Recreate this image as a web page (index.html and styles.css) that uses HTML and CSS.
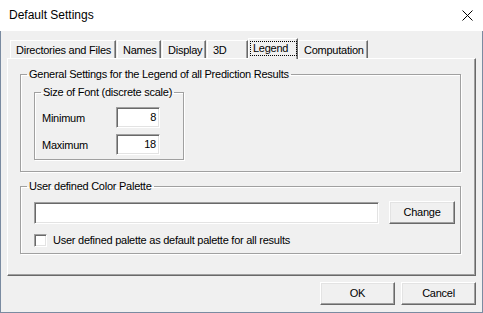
FILE: index.html
```html
<!DOCTYPE html>
<html>
<head>
<meta charset="utf-8">
<link rel="stylesheet" href="styles.css">
</head>
<body>
<div class="window">
  <div class="titlebar">
    <span class="title">Default Settings</span>
    <svg class="close" width="11" height="11" viewBox="0 0 11 11"><path d="M0.5 0.5 L10.5 10.5 M10.5 0.5 L0.5 10.5" stroke="#000" stroke-width="1" fill="none"/></svg>
  </div>
  <div class="frame">
    <div class="tabs">
      <div class="tab t1">Directories and Files</div>
      <div class="tab t2">Names</div>
      <div class="tab t3">Display</div>
      <div class="tab t4">3D</div>
      <div class="tab sel t5"><span class="focus">Legend</span></div>
      <div class="tab t6">Computation</div>
    </div>
    <div class="panel">
      <fieldset class="group g1">
        <legend>General Settings for the Legend of all Prediction Results</legend>
        <div class="g1-body">
          <fieldset class="group gfont">
            <legend>Size of Font (discrete scale)</legend>
            <div class="gfont-body">
              <div class="row"><span class="lbl">Minimum</span><div class="edit num">8</div></div>
              <div class="row"><span class="lbl">Maximum</span><div class="edit num">18</div></div>
            </div>
          </fieldset>
        </div>
      </fieldset>
      <fieldset class="group g2">
        <legend>User defined Color Palette</legend>
        <div class="g2-body">
          <div class="palrow"><div class="edit wide"></div><div class="btn change">Change</div></div>
          <div class="check"><span class="box"></span><span>User defined palette as default palette for all results</span></div>
        </div>
      </fieldset>
    </div>
    <div class="buttons">
      <div class="btn dlg">OK</div>
      <div class="btn dlg">Cancel</div>
    </div>
  </div>
</div>
</body>
</html>
```
FILE: styles.css
```css
* { box-sizing: border-box; }
html, body { margin: 0; padding: 0; background: #f0f0f0; }
body {
  font-family: "Liberation Sans", Arial, sans-serif;
  font-size: 11px;
  letter-spacing: -0.25px;
  color: #000;
}
.window {
  width: 483px;
  height: 313px;
  display: flex;
  flex-direction: column;
  background: #f0f0f0;
}
.titlebar {
  height: 31px;
  flex: none;
  background: #fff;
  display: flex;
  align-items: flex-start;
  padding-left: 9px;
}
.title {
  font-size: 12px;
  letter-spacing: 0;
  line-height: 14px;
  margin-top: 8px;
}
.close {
  margin-left: auto;
  margin-right: 10px;
  margin-top: 10px;
}
.frame {
  flex: 1;
  border: 1px solid #7a8ba1;
  border-top: 0;
  padding: 7px 6px 0 6px;
  display: flex;
  flex-direction: column;
}
.tabs {
  height: 20px;
  display: flex;
  align-items: flex-end;
  padding-left: 3px;
  position: relative;
  z-index: 2;
}
.tab {
  height: 18px;
  border-top: 1px solid #fff;
  border-left: 1px solid #fff;
  border-right: 1px solid #696969;
  box-shadow: inset -1px 0 0 #a0a0a0;
  background: #f0f0f0;
  text-align: left;
  padding-left: 5px;
  line-height: 16px;
  padding-top: 1px;
  margin-right: 1px;
  white-space: nowrap;
}
.t1 { width: 106px; }
.t2 { width: 44px; }
.t3 { width: 44px; }
.t4 { width: 41px; margin-right: 0; }
.t5 { width: 50px; margin-right: 0; }
.t6 { width: 70px; }
.tab.sel {
  height: 21px;
  margin-bottom: -1px;
  padding-top: 3px;
  padding-left: 2px;
  line-height: 13px;
}
.focus {
  display: inline-block;
  outline: 1px dotted #000;
  outline-offset: 0;
  width: 45px;
  padding-left: 2px;
  line-height: 12px;
  height: 13px;
}
.panel {
  height: 218px;
  flex: none;
  border-top: 1px solid #fff;
  border-left: 1px solid #fff;
  border-right: 1px solid #696969;
  border-bottom: 1px solid #696969;
  box-shadow: inset -1px -1px 0 #a0a0a0;
  padding-top: 9px;
  display: flex;
  flex-direction: column;
}
.group {
  padding: 0;
  min-width: 0;
  border: 1px solid #a0a0a0;
  box-shadow: inset 1px 1px 0 #fff, 1px 1px 0 #fff;
}
.group > legend {
  padding: 0 2px;
  margin-left: 6px;
  line-height: 13px;
  height: 13px;
}
.g1 {
  margin: 0 14px 0 12px;
}
.g1-body {
  padding: 5px 0 11px 13px;
}
.gfont {
  width: 150px;
  margin: 0;
}
.gfont-body {
  padding: 8px 0 4px 7px;
}
.row {
  display: flex;
  align-items: center;
  height: 21px;
}
.row + .row { margin-top: 6px; }
.lbl { width: 74px; }
.edit {
  background: #fff;
  border-top: 1px solid #a0a0a0;
  border-left: 1px solid #a0a0a0;
  border-right: 1px solid #fff;
  border-bottom: 1px solid #fff;
  box-shadow: inset 1px 1px 0 #696969, inset -1px -1px 0 #e3e3e3;
}
.num {
  width: 44px;
  height: 21px;
  text-align: right;
  padding-right: 3px;
  line-height: 19px;
}
.g2 {
  margin: 8px 14px 0 12px;
}
.g2-body {
  padding: 8px 0 6px 13px;
}
.palrow {
  display: flex;
  align-items: flex-start;
}
.wide {
  width: 345px;
  height: 22px;
  margin-top: 1px;
}
.btn {
  background: #f0f0f0;
  border-top: 1px solid #fff;
  border-left: 1px solid #fff;
  border-right: 1px solid #696969;
  border-bottom: 1px solid #696969;
  box-shadow: inset -1px -1px 0 #a0a0a0, inset 1px 1px 0 #e3e3e3;
  text-align: center;
  height: 23px;
  line-height: 21px;
}
.change {
  width: 66px;
  margin-left: 10px;
}
.check {
  display: flex;
  align-items: center;
  margin-top: 10px;
  height: 13px;
  line-height: 13px;
}
.box {
  width: 13px;
  height: 13px;
  background: #fff;
  border-top: 1px solid #a0a0a0;
  border-left: 1px solid #a0a0a0;
  border-right: 1px solid #fff;
  border-bottom: 1px solid #fff;
  box-shadow: inset 1px 1px 0 #696969, inset -1px -1px 0 #e3e3e3;
  margin-right: 6px;
  flex: none;
}
.buttons {
  display: flex;
  justify-content: flex-end;
  margin-top: 6px;
  gap: 6px;
}
.dlg { width: 75px; }
```
